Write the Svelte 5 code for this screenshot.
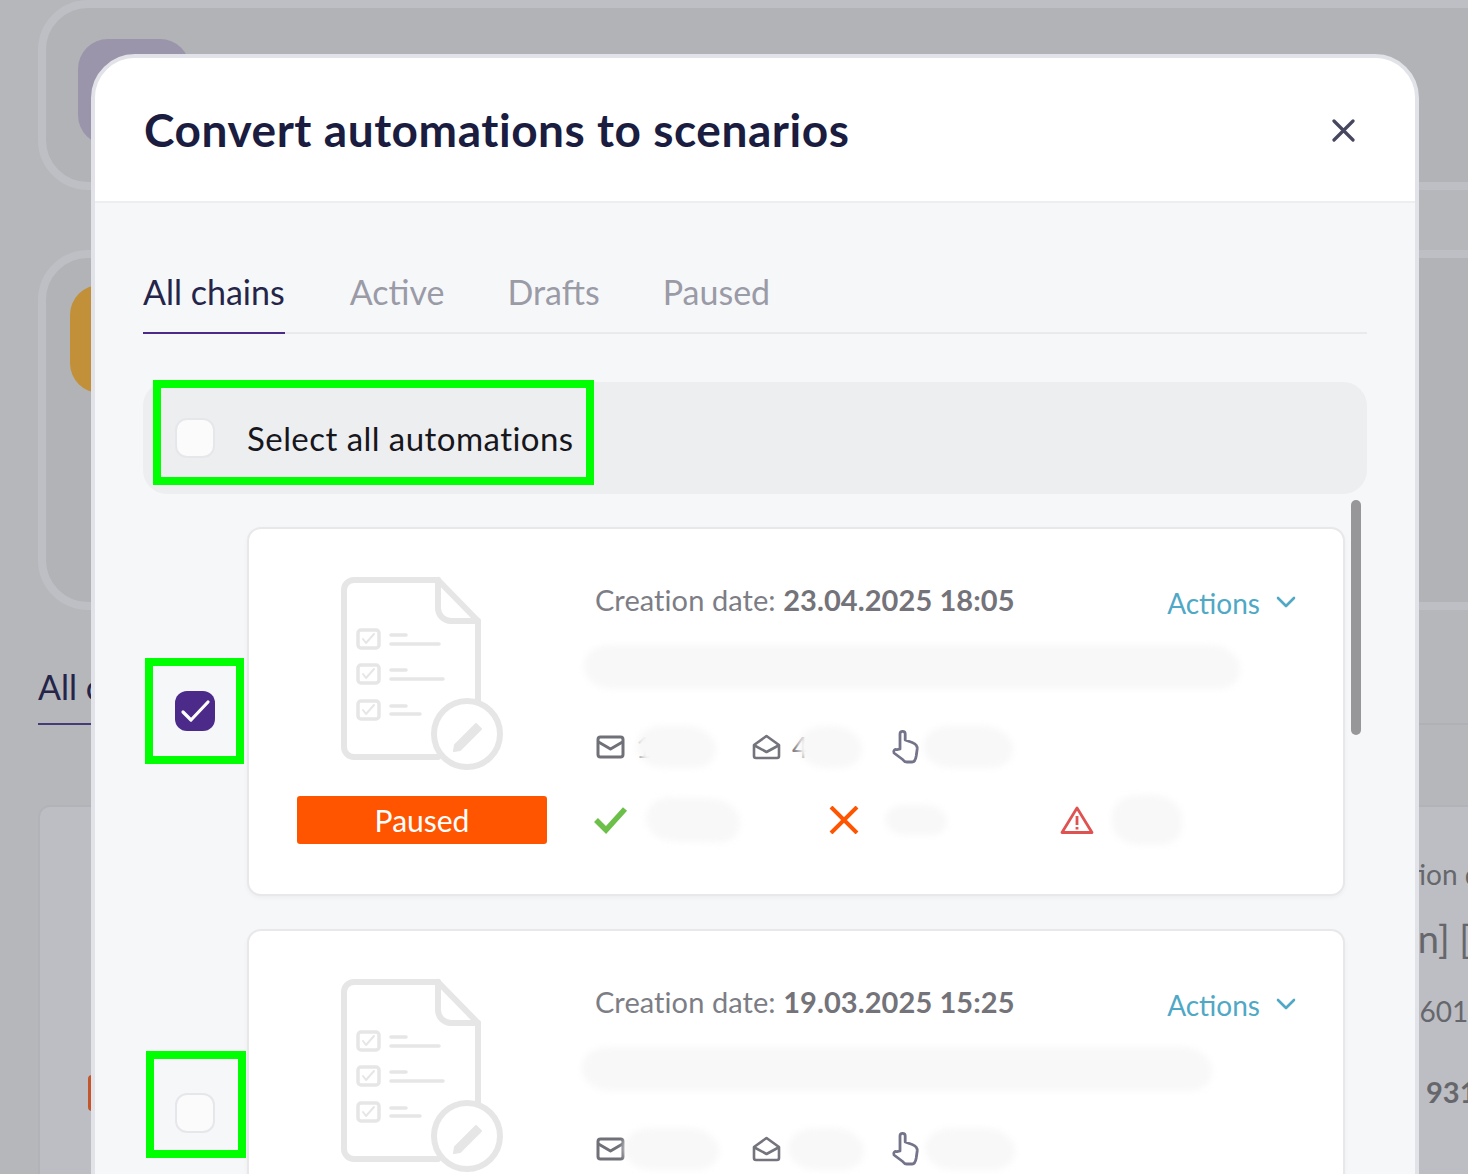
<script>
	const tabs = ['All chains', 'Active', 'Drafts', 'Paused'];

	const cards = [
		{
			date: '23.04.2025 18:05',
			checked: true,
			mark: 'markA',
			title: { w: 656, ml: -11 },
			stats: [
				{ icon: 'mail', n: '1', w: 80, ml: -16 },
				{ icon: 'open', n: '4', w: 64, ml: -10 },
				{ icon: 'hand', n: '', w: 90, ml: -8 }
			],
			status: true
		},
		{
			date: '19.03.2025 15:25',
			checked: false,
			mark: 'markB',
			title: { w: 630, ml: -13 },
			stats: [
				{ icon: 'mail', n: '', w: 95, ml: -12 },
				{ icon: 'open', n: '', w: 76, ml: -4 },
				{ icon: 'hand', n: '', w: 90, ml: -6 }
			],
			status: false
		}
	];
</script>

{#snippet docIcon()}
	<svg class="doc" viewBox="330 570 180 205" fill="none" stroke="#e6e6e6" stroke-width="6" stroke-linejoin="round" stroke-linecap="round">
		<path d="M438 580H354a10 10 0 0 0-10 10V747a10 10 0 0 0 10 10H438" />
		<path d="M438 580L478 621V702" />
		<path d="M438 580V608a13 13 0 0 0 13 13H478" />
		<circle cx="467" cy="734" r="33" fill="#fff" />
		<path d="M455 745L476 724L481 729L460 750L454 751Z" fill="#e6e6e6" stroke-width="2" />
		<g stroke-width="3.500">
			<rect x="358" y="630" width="21" height="18" rx="3" />
			<rect x="358" y="665" width="21" height="18" rx="3" />
			<rect x="358" y="701" width="21" height="18" rx="3" />
			<path d="M363 639l3 4 8-9M363 674l3 4 8-9M363 710l3 4 8-9" stroke-width="2" />
			<path d="M391 635H406M391 644H439M391 670H406M391 679H443M391 706H406M391 714H420" />
		</g>
	</svg>
{/snippet}

{#snippet statIcon(name)}
	{#if name === 'mail'}
		<svg class="icon" viewBox="0 0 30 26" fill="none" stroke="#6f7078" stroke-width="3" stroke-linejoin="round">
			<rect x="2" y="3" width="25" height="20" rx="2.5" />
			<path d="M2.5 8L14.5 15L26.5 8" />
		</svg>
	{:else if name === 'open'}
		<svg class="icon" viewBox="0 0 30 26" fill="none" stroke="#73747c" stroke-width="2.6" stroke-linejoin="round">
			<path d="M2 11L14.5 2L27 11V22a2 2 0 0 1-2 2H4a2 2 0 0 1-2-2Z" />
			<path d="M2.5 11.5L14.5 18L26.5 11.5" />
		</svg>
	{:else}
		<svg class="icon hand" viewBox="0 0 30 36" fill="none" stroke="#73748a" stroke-width="2.8" stroke-linejoin="round" stroke-linecap="round">
			<path d="M9 20V5a2.6 2.6 0 0 1 5.2 0V11l7 2.5c3.500 1.300 5.300 3.500 5 6.500l-1 7c-.5 3-2 6-4 6h-5.500c-2 0-3-1-4-2.500L3 24c-1.300-2.200 1-4.300 3-3.300Z" />
		</svg>
	{/if}
{/snippet}

<div class="page">
	<div class="backdrop">
		<div class="bgCard top"><div class="bgThumb purple"></div></div>
		<div class="bgCard mid"><div class="bgThumb amber"></div></div>
		<div class="bgTabs"><span class="bgTab">All chains</span></div>
		<div class="bgTable">
			<div class="bgTag"></div>
			<div class="bgCell">
				<p class="bgDate">Creation date</p>
				<p class="bgName">[Admin] [</p>
				<p class="bgNum">12601</p>
				<p class="bgBold">931</p>
			</div>
		</div>
	</div>

	<div class="modal">
		<header class="head">
			<h2>Convert automations to scenarios</h2>
			<button class="close" aria-label="Close">
				<svg viewBox="0 0 24 24" fill="none" stroke="#46465f" stroke-width="3.200" stroke-linecap="round">
					<path d="M3 3L22 22M22 3L3 22" />
				</svg>
			</button>
		</header>

		<div class="body">
			<nav class="tabs">
				{#each tabs as tab, i}
					<span class="tab" class:active={i === 0}>{tab}</span>
				{/each}
			</nav>

			<div class="selectAll">
				<span class="mark markAll"></span>
				<span class="box"></span>
				<span class="selectLabel">Select all automations</span>
			</div>

			<div class="list">
				<div class="scrollbar"></div>
				{#each cards as card}
					<div class="row">
						<div class="pick">
							<span class="box" class:checked={card.checked}>
								{#if card.checked}
									<svg viewBox="0 0 40 40" fill="none" stroke="#fff" stroke-width="3.200" stroke-linecap="round" stroke-linejoin="round">
										<path d="M8 21L16 29L33 11" />
									</svg>
								{/if}
								<span class="mark {card.mark}"></span>
							</span>
						</div>
						<article class="card">
							<div class="side">
								{@render docIcon()}
								<div class="badge">Paused</div>
							</div>
							<div class="info">
								<div class="topLine">
									<p class="date">Creation date: <b>{card.date}</b></p>
									<span class="actions">
										Actions
										<svg viewBox="0 0 20 12" fill="none" stroke="#4fa8c5" stroke-width="2.600" stroke-linecap="round" stroke-linejoin="round">
											<path d="M2 2L10 10L18 2" />
										</svg>
									</span>
								</div>
								<div class="smudge titleSmudge" style="width:{card.title.w}px;margin-left:{card.title.ml}px"></div>
								<div class="stats">
									{#each card.stats as s}
										<div class="stat">
											{@render statIcon(s.icon)}
											<span class="num">{s.n}</span>
											<span class="smudge" style="width:{s.w}px;margin-left:{s.ml}px"></span>
										</div>
									{/each}
								</div>
								{#if card.status}
									<div class="results">
										<div class="result">
											<svg class="rIcon" viewBox="0 0 34 28" fill="none" stroke="#6cc04a" stroke-width="5.500" stroke-linejoin="miter">
												<path d="M2 14L12 24L31 3" />
											</svg>
											<span class="smudge wide"></span>
										</div>
										<div class="result">
											<svg class="rIcon" viewBox="0 0 34 28" fill="none" stroke="#ff5500" stroke-width="4">
												<path d="M4 1L30 27M30 1L4 27" />
											</svg>
											<span class="smudge narrow"></span>
										</div>
										<div class="result">
											<svg class="rIcon" viewBox="0 0 34 28" fill="none" stroke="#e05252" stroke-width="2.800" stroke-linejoin="round">
												<path d="M17 2L32 26.500H2Z" />
												<path d="M17 10V19M17 21V23.500" />
											</svg>
											<span class="smudge blob"></span>
										</div>
									</div>
								{/if}
							</div>
						</article>
					</div>
				{/each}
			</div>
		</div>
	</div>
</div>

<style>
	:global(body) {
		margin: 0;
		background: #b6b7bb;
	}

	.page {
		position: relative;
		width: 1468px;
		height: 1174px;
		overflow: hidden;
		font-family: Lato, "Noto Sans", sans-serif;
	}

	.backdrop {
		padding-left: 38px;
		height: 100%;
		box-sizing: border-box;
		background: #b6b7bb;
	}

	.bgCard {
		box-sizing: border-box;
		width: 1500px;
		border: 8px solid #bebfc4;
		border-radius: 50px;
		background: #b2b3b7;
	}

	.bgCard.top {
		height: 190px;
		padding: 31px 0 0 32px;
	}

	.bgCard.mid {
		height: 360px;
		margin-top: 60px;
		padding: 27px 0 0 24px;
	}

	.bgThumb {
		width: 112px;
		height: 106px;
		border-radius: 30px;
	}

	.purple {
		background: #9b95ab;
	}

	.amber {
		height: 108px;
		background: #c19038;
	}

	.bgTabs {
		margin-top: 58px;
		height: 55px;
		width: 1500px;
		border-bottom: 2px solid #b0b1b6;
		font-size: 34px;
		line-height: 38px;
		color: #25254a;
	}

	.bgTab {
		display: inline-block;
		height: 55px;
		border-bottom: 2px solid #463a78;
	}

	.bgTable {
		display: flex;
		box-sizing: border-box;
		width: 1500px;
		height: 400px;
		margin-top: 80px;
		border: 2px solid #b2b3b8;
		border-radius: 12px;
		background: #bdbec3;
		color: #66676c;
	}

	.bgTag {
		width: 60px;
		height: 36px;
		margin: 268px 0 0 48px;
		border-radius: 4px;
		background: #c4552a;
	}

	.bgCell {
		margin-left: 1204px;
		white-space: nowrap;
	}

	.bgCell p {
		margin: 0;
	}

	.bgDate {
		padding-top: 49px;
		font-size: 28px;
		line-height: 36px;
	}

	.bgCell .bgName {
		margin-left: -32px;
		padding-top: 23px;
		font-size: 38px;
		line-height: 46px;
	}

	.bgCell .bgNum {
		margin-left: 35px;
		padding-top: 33px;
		font-size: 28px;
		line-height: 34px;
	}

	.bgCell .bgBold {
		margin-left: 74px;
		padding-top: 47px;
		font-size: 29px;
		line-height: 34px;
		font-weight: 700;
	}

	.modal {
		position: absolute;
		top: 54px;
		left: 91px;
		box-sizing: border-box;
		width: 1328px;
		height: 1300px;
		border: 4px solid #e2e3e9;
		border-radius: 44px;
		background: #f6f7f9;
		overflow: hidden;
	}

	.head {
		display: flex;
		align-items: center;
		justify-content: space-between;
		box-sizing: border-box;
		height: 145px;
		padding: 0 60px 0 49px;
		background: #fff;
		border-bottom: 2px solid #edeef0;
	}

	h2 {
		margin: 0;
		font-size: 46px;
		letter-spacing: 0.55px;
		font-weight: 700;
		color: #1a1c40;
	}

	.close {
		width: 24px;
		height: 24px;
		padding: 0;
		border: 0;
		background: none;
	}

	.close svg {
		display: block;
	}

	.body {
		padding: 0 48px;
	}

	.tabs {
		display: flex;
		gap: 63px;
		height: 131px;
		box-sizing: border-box;
		align-items: flex-end;
		border-bottom: 2px solid #e9eaec;
		font-size: 34px;
		color: #9a9ba6;
	}

	.tab {
		box-sizing: border-box;
		height: 62px;
		margin-bottom: -2px;
		border-bottom: 2px solid transparent;
		line-height: 40px;
	}

	.tab.active {
		margin-right: 2px;
		color: #25254a;
		border-bottom-color: #4b2a8a;
	}

	.selectAll {
		position: relative;
		display: flex;
		align-items: center;
		box-sizing: border-box;
		height: 112px;
		margin-top: 48px;
		padding-left: 32px;
		border-radius: 24px;
		background: #edeef0;
	}

	.selectLabel {
		margin-left: 32px;
		font-size: 33px;
		letter-spacing: 0.45px;
		color: #16161c;
	}

	.box {
		position: relative;
		display: block;
		box-sizing: border-box;
		width: 40px;
		height: 40px;
		border: 2px solid #e6e7ea;
		border-radius: 12px;
		background: #fbfbfc;
	}

	.box.checked {
		border: 0;
		background: #4b2a8a;
	}

	.box svg {
		display: block;
	}

	.mark {
		position: absolute;
		box-sizing: border-box;
		border: 8px solid #00ff00;
		pointer-events: none;
	}

	.markAll {
		top: -2px;
		left: 10px;
		width: 441px;
		height: 105px;
	}

	.markA {
		top: -33px;
		left: -30px;
		width: 99px;
		height: 106px;
	}

	.markB {
		top: -44px;
		left: -31px;
		width: 100px;
		height: 107px;
	}

	.list {
		position: relative;
		margin-top: 33px;
	}

	.scrollbar {
		position: absolute;
		top: -27px;
		right: 6px;
		width: 10px;
		height: 235px;
		border-radius: 5px;
		background: #97979a;
	}

	.row {
		display: flex;
		align-items: center;
		margin-bottom: 33px;
	}

	.pick {
		box-sizing: border-box;
		width: 105px;
		padding: 0 0 2px 32px;
	}

	.card {
		display: flex;
		box-sizing: border-box;
		width: 1098px;
		height: 369px;
		margin-left: -1px;
		padding-left: 48px;
		border: 2px solid #e8e8ea;
		border-radius: 14px;
		background: #fff;
		box-shadow: 0 2px 4px rgba(0, 0, 0, 0.04);
	}

	.side {
		display: flex;
		flex-direction: column;
		align-items: center;
		width: 250px;
		padding-top: 41px;
	}

	.doc {
		display: block;
		width: 180px;
		height: 205px;
		margin-left: -4px;
	}

	.badge {
		width: 250px;
		height: 48px;
		margin-top: 21px;
		border-radius: 3px;
		background: #ff5500;
		color: #fff;
		font-size: 30px;
		line-height: 48px;
		text-align: center;
	}

	.info {
		flex: 1;
		padding: 51px 0 0 48px;
	}

	.topLine {
		display: flex;
		justify-content: space-between;
		align-items: flex-start;
		padding-right: 47px;
		height: 44px;
	}

	.date {
		margin: 0;
		font-size: 29px;
		letter-spacing: 0.08px;
		line-height: 40px;
		color: #7c7d85;
	}

	.date b {
		color: #737379;
	}

	.actions {
		display: flex;
		align-items: center;
		gap: 16px;
		margin-top: 3px;
		font-size: 28px;
		line-height: 40px;
		color: #4fa8c5;
	}

	.actions svg {
		width: 20px;
		height: 12px;
		margin-top: -2px;
	}

	.smudge {
		display: block;
		height: 42px;
		border-radius: 26px 30px 22px 28px / 20px 24px 18px 22px;
		background: #f8f8f8;
		filter: blur(3px);
	}

	.titleSmudge {
		height: 44px;
		margin-top: 21px;
	}

	.stats {
		display: flex;
		height: 50px;
		margin-top: 33px;
		align-items: center;
	}

	.stat {
		display: flex;
		align-items: center;
		width: 156px;
	}

	.stat:nth-child(2) {
		width: 139px;
	}

	.icon {
		flex: none;
		width: 30px;
		height: 26px;
		margin-left: 1px;
	}

	.icon.hand {
		height: 36px;
	}

	.num {
		margin-left: 10px;
		font-size: 28px;
		color: #7c7d85;
	}

	.results {
		display: flex;
		align-items: center;
		height: 52px;
		margin-top: 22px;
		margin-left: -1px;
	}

	.result {
		display: flex;
		align-items: center;
		gap: 18px;
		width: 233px;
	}

	.rIcon {
		flex: none;
		width: 34px;
		height: 28px;
	}

	.wide {
		width: 94px;
		height: 44px;
		transform: rotate(2deg);
	}

	.narrow {
		width: 62px;
		height: 30px;
		margin-left: 6px;
	}

	.blob {
		width: 70px;
		height: 50px;
	}
</style>
